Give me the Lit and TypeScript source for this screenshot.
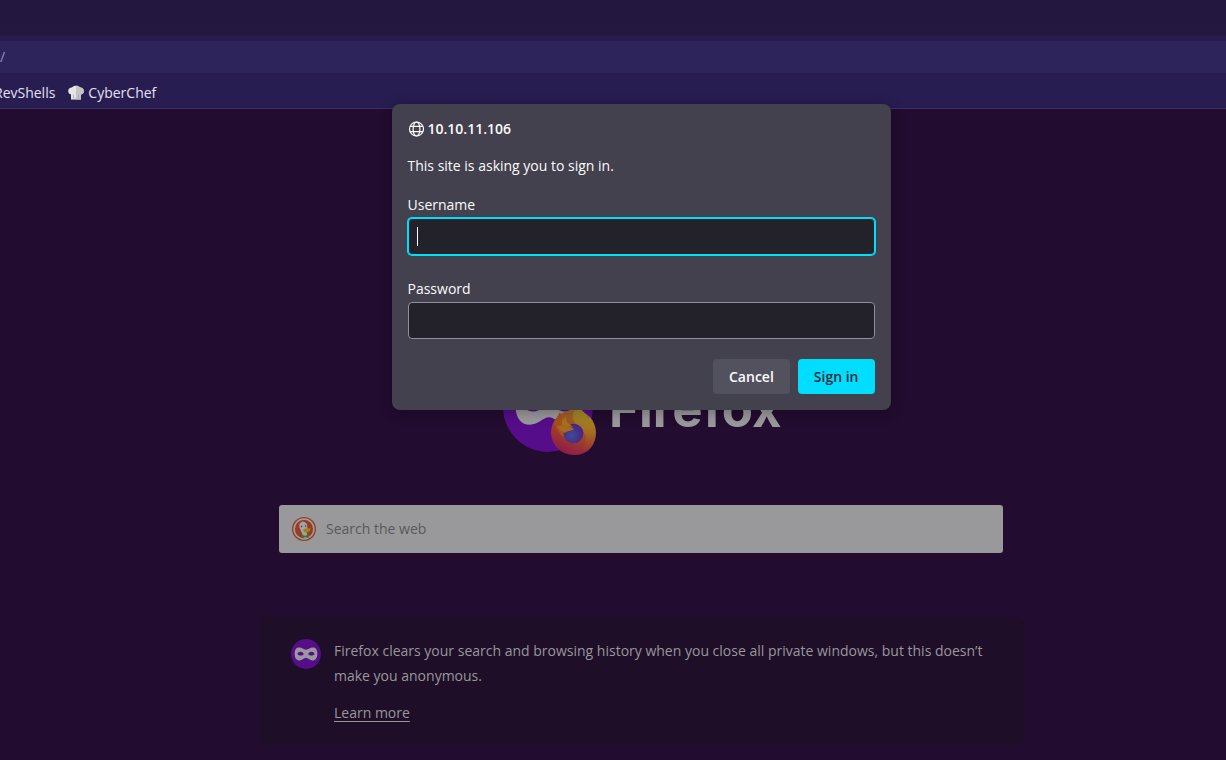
import { LitElement, html, svg, css } from "lit";
import { customElement } from "lit/decorators.js";

const MASK =
  "M50 34C40 34 36 26 22 26C10 26 5 35 5 50C5 66 13 74 24 74C36 74 42 64 50 64C58 64 64 74 76 74C87 74 95 66 95 50C95 35 90 26 78 26C64 26 60 34 50 34ZM28 42C35 42 40 47 41 50C39 54 34 56 28 56C22 56 18 53 16 50C18 45 22 42 28 42ZM72 42C78 42 82 45 84 50C82 53 78 56 72 56C66 56 61 54 59 50C60 47 65 42 72 42Z";

const globeIcon = html`
  <svg class="globe" viewBox="0 0 16 16" aria-hidden="true">
    <g fill="none" stroke="currentColor" stroke-width="1.2">
      <circle cx="8.500" cy="8" r="7"></circle>
      <ellipse cx="8.500" cy="8" rx="3.4" ry="7"></ellipse>
      <path d="M2.1 5.4H14.9M2.1 10.6H14.9"></path>
    </g>
  </svg>
`;

const chefHat = html`
  <svg class="hat" viewBox="0 0 16 16" aria-hidden="true">
    <path
      fill="#e4e4e4"
      d="M3 14.5V9.5C1 9 .2 7.600 .2 6C.2 3.600 2 2.200 4 2.400C4.800 1.400 6.300 .8 8 .8C9.700 .8 11.200 1.400 12 2.400C14 2.200 15.800 3.600 15.800 6C15.800 7.600 15 9 13 9.500V14.500Z"
    ></path>
    <path
      fill="#c4c4c4"
      d="M8 .8C9.700 .8 11.200 1.400 12 2.400C14 2.200 15.800 3.600 15.800 6C15.800 7.600 15 9 13 9.500V14.500H8Z"
    ></path>
    <path stroke="#a2a2a2" stroke-width=".7" d="M3 14.200H13M5.500 9.500V13M10.500 9.500V13"></path>
  </svg>
`;

const duckIcon = html`
  <svg class="duck" viewBox="0 0 24 24" aria-hidden="true">
    <circle cx="12" cy="12" r="12" fill="#953e27"></circle>
    <circle cx="12" cy="12" r="9.900" fill="none" stroke="#a19fa1" stroke-width="1.500"></circle>
    <path
      fill="#a3a1a3"
      d="M12 21C10.500 17 9 14 7.400 10.500C6.800 7.500 8 5.500 9.600 5C10.500 4.300 12 4.400 13 5.200C15 6 15.600 8.500 15.200 11.500L14.500 15L16 20.300C15 21.200 13.500 21.400 12 21Z"
    ></path>
    <circle cx="9.500" cy="9.500" r=".8" fill="#33405c"></circle>
    <circle cx="13.600" cy="9" r=".7" fill="#33405c"></circle>
    <path fill="#a5811c" d="M11.500 12.300C13.500 11.200 16 11.300 18.800 11.500L17.500 13L18.600 13.600C17 15.600 13.500 15.800 11.500 14.700Z"></path>
    <path fill="#2d7d2b" d="M10 18L13 18.800L16.500 17.800V21L13 20.300L10.200 21Z"></path>
  </svg>
`;

const foxGlobe = svg`
  <g transform="translate(48 48)">
    <circle cx="22.500" cy="22.500" r="22.500" fill="url(#fox)"></circle>
    <path fill="url(#tail)" d="M26 -3C34 2 36 5 37 9L39 7C43 13 45 18 44.500 25C44 38 34 45 24 45C34 40 37 30 33 22C30 15 21 14 22 6C22.500 2 24 -1 26 -3Z"></path>
    <path fill="#a5521c" d="M3 13L9 2L11 10L15 6L16 12L23 17L15 21L12 27C8 24 6 18 3 13Z"></path>
    <circle cx="22.500" cy="23.500" r="9.800" fill="url(#world)"></circle>
    <path fill="#a8681e" d="M6 16.500C11 15 16 15 19 16.500L23 19C20 21.500 16 20.500 14 23C12 22 8 20 6 16.500Z"></path>
    <path fill="#a4731f" d="M11 10L15 6L16 12L22 17L11 15Z"></path>
  </g>
`;

@customElement("app-root")
export class AppRoot extends LitElement {
  static styles = css`
    :host {
      display: flex;
      flex-direction: column;
      position: relative;
      min-height: 100vh;
      box-sizing: border-box;
      overflow: hidden;
      border-bottom: 2px solid #120718;
      background: #220c2f;
      color: #fbfbfe;
      font: 14px/20px "Open Sans", "Noto Sans", sans-serif;
    }
    * {
      box-sizing: border-box;
    }
    .tabs {
      height: 41px;
      background: linear-gradient(#23163f, #25183f 85%, #281b4c 90%);
    }
    .urlbar {
      height: 32px;
      background: #2e245c;
      color: #9a93b0;
      line-height: 32px;
    }
    .bookmarks {
      display: flex;
      align-items: center;
      gap: 13px;
      height: 36px;
      padding-top: 4px;
      background: #281d50;
      border-bottom: 1px solid #3b3169;
    }
    .bookmarks a {
      display: flex;
      align-items: center;
      gap: 4px;
      color: #e4e0f0;
      text-decoration: none;
    }
    .bookmarks a:first-child {
      margin-left: -6px;
    }
    .hat {
      width: 16px;
      height: 16px;
    }
    main {
      display: flex;
      flex-direction: column;
      align-items: center;
      padding: 253px 0 16px 56px;
    }
    .brand {
      display: flex;
      gap: 12px;
      width: 276px;
      height: 94px;
    }
    .logo {
      flex: none;
      width: 94px;
      height: 94px;
    }
    .wordmark {
      margin: 0;
      padding-top: 15px;
      color: #9a989c;
      font: 700 51px/64px Inter, sans-serif;
    }
    .search {
      display: flex;
      align-items: center;
      gap: 10px;
      width: 100%;
      max-width: 724px;
      height: 48px;
      margin-top: 49px;
      padding: 0 13px;
      border-radius: 3px;
      background: #99989a;
    }
    .duck {
      flex: none;
      width: 24px;
      height: 24px;
    }
    .search input {
      flex: 1;
      padding: 0;
      border: 0;
      outline: 0;
      background: none;
      color: #333;
      font: inherit;
    }
    .search input::placeholder {
      color: #59585b;
      opacity: 1;
    }
    .info {
      display: flex;
      gap: 13px;
      width: 100%;
      max-width: 766px;
      margin-top: 64px;
      padding: 21px 32px 20px 33px;
      border-radius: 8px;
      background: #1e0e28;
      color: #99979b;
      line-height: 25px;
    }
    .info svg {
      flex: none;
      width: 30px;
      height: 30px;
      margin-top: 1px;
    }
    .info p {
      margin: 0 0 12px;
    }
    .info a {
      color: inherit;
      text-underline-offset: 3px;
    }
    .layer {
      position: absolute;
      inset: 104px 0 auto 56px;
      display: flex;
      justify-content: center;
    }
    dialog {
      position: static;
      width: 499px;
      margin: 0;
      padding: 15px 16px 16px;
      border: 0;
      border-radius: 8px;
      background: #42414d;
      color: #fbfbfe;
      box-shadow: 0 2px 14px rgba(0, 0, 0, 0.3);
    }
    h2 {
      display: flex;
      align-items: center;
      gap: 4px;
      margin: 0 0 17px;
      font-size: 14px;
      font-weight: 600;
      line-height: 20px;
    }
    .globe {
      width: 16px;
      height: 16px;
    }
    .ask {
      margin: 0 0 19px;
    }
    .field {
      display: flex;
      flex-direction: column;
      gap: 3px;
      margin-bottom: 24px;
    }
    .field input {
      width: 100%;
      height: 37px;
      padding: 0 8px;
      border: 1px solid #8f8f9d;
      border-radius: 4px;
      outline: 0;
      background: #23222b;
      color: inherit;
      font: inherit;
    }
    .entry {
      display: grid;
      align-items: center;
    }
    .entry > * {
      grid-area: 1 / 1;
    }
    .entry input {
      border-color: #00ddff;
      box-shadow: 0 0 0 1px #00ddff;
    }
    .caret {
      width: 1px;
      height: 19px;
      margin-left: 9px;
      background: #fbfbfe;
    }
    .actions {
      display: flex;
      justify-content: flex-end;
      gap: 8px;
      margin-top: -4px;
    }
    button {
      height: 35px;
      padding: 0 16px;
      border: 0;
      border-radius: 4px;
      background: #52515e;
      color: #fbfbfe;
      font: 600 14px/20px "Open Sans", "Noto Sans", sans-serif;
    }
    .primary {
      background: #00ddff;
      color: #2b2a33;
    }
  `;

  render() {
    return html`
      <header>
        <div class="tabs"></div>
        <div class="urlbar">/</div>
        <nav class="bookmarks">
          <a href="#">RevShells</a>
          <a href="#">${chefHat}CyberChef</a>
        </nav>
      </header>
      <main>
        <div class="brand">
          <svg class="logo" viewBox="0 0 94 94" aria-hidden="true">
            <defs>
              <linearGradient id="fox" x1=".8" y1="0" x2=".3" y2="1">
                <stop offset="0" stop-color="#a07a24"></stop>
                <stop offset=".5" stop-color="#a04824"></stop>
                <stop offset="1" stop-color="#8e1848"></stop>
              </linearGradient>
              <linearGradient id="tail" x1=".5" y1="0" x2=".4" y2="1">
                <stop offset="0" stop-color="#a2952c"></stop>
                <stop offset=".5" stop-color="#a36c20"></stop>
                <stop offset="1" stop-color="#951c42"></stop>
              </linearGradient>
              <radialGradient id="world" cx=".4" cy=".6" r=".7">
                <stop offset="0" stop-color="#3c4c94"></stop>
                <stop offset="1" stop-color="#4c1c80"></stop>
              </radialGradient>
            </defs>
            <circle cx="45" cy="45" r="45" fill="#560d89"></circle>
            <path fill="#99989a" transform="translate(9 8) scale(.74)" d=${MASK}></path>
            ${foxGlobe}
          </svg>
          <h1 class="wordmark">Firefox</h1>
        </div>
        <label class="search">
          ${duckIcon}
          <input type="text" placeholder="Search the web" aria-label="Search the web" />
        </label>
        <section class="info">
          <svg viewBox="0 0 100 100" aria-hidden="true">
            <circle cx="50" cy="50" r="50" fill="#560d89"></circle>
            <path fill="#99989a" transform="translate(8 5) scale(.84 .9)" d=${MASK}></path>
          </svg>
          <div>
            <p>
              Firefox clears your search and browsing history when you close all private windows, but
              this doesn’t make you anonymous.
            </p>
            <a href="#">Learn more</a>
          </div>
        </section>
      </main>
      <div class="layer">
        <dialog open aria-labelledby="host">
          <h2 id="host">${globeIcon}10.10.11.106</h2>
          <p class="ask">This site is asking you to sign in.</p>
          <div class="field">
            <label for="username">Username</label>
            <div class="entry">
              <input id="username" type="text" />
              <span class="caret"></span>
            </div>
          </div>
          <div class="field">
            <label for="password">Password</label>
            <input id="password" type="password" />
          </div>
          <div class="actions">
            <button type="button">Cancel</button>
            <button type="button" class="primary">Sign in</button>
          </div>
        </dialog>
      </div>
    `;
  }
}
